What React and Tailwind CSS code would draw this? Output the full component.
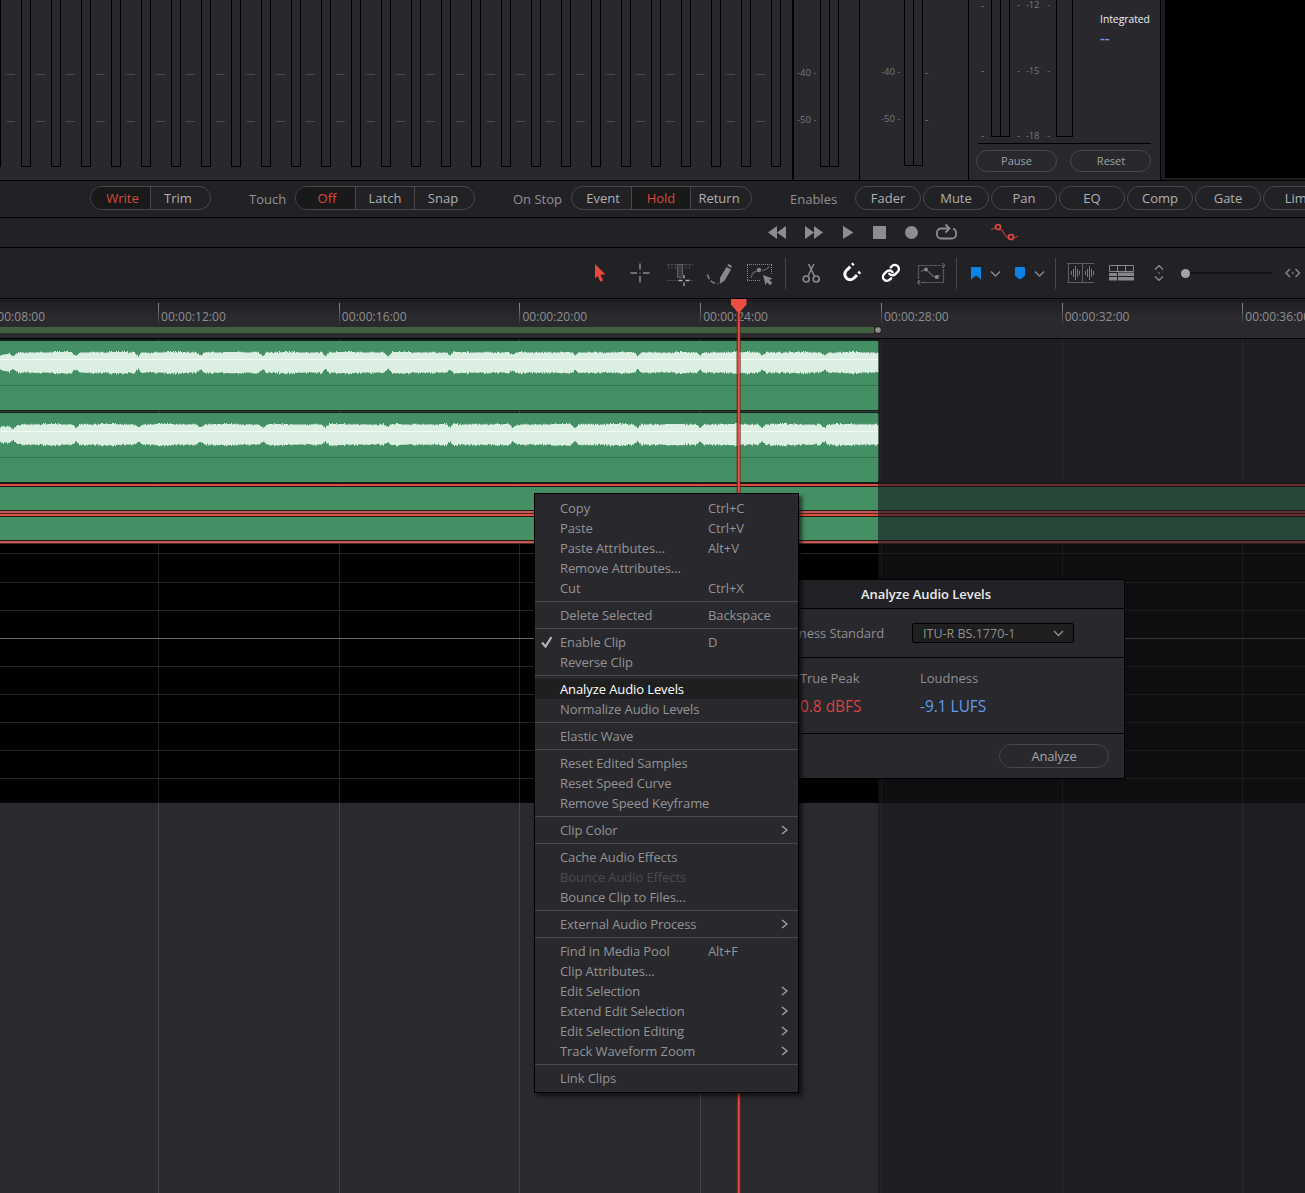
import clsx from 'clsx';

const strips = Array.from({ length: 27 }, (_, i) => i);
const timecodes = ['08', '12', '16', '20', '24', '28', '32', '36'];

const menuGroups = [
  [
    { label: 'Copy', keys: 'Ctrl+C' },
    { label: 'Paste', keys: 'Ctrl+V' },
    { label: 'Paste Attributes...', keys: 'Alt+V' },
    { label: 'Remove Attributes...' },
    { label: 'Cut', keys: 'Ctrl+X' },
  ],
  [{ label: 'Delete Selected', keys: 'Backspace' }],
  [{ label: 'Enable Clip', keys: 'D', checked: true }, { label: 'Reverse Clip' }],
  [{ label: 'Analyze Audio Levels', active: true }, { label: 'Normalize Audio Levels' }],
  [{ label: 'Elastic Wave' }],
  [
    { label: 'Reset Edited Samples' },
    { label: 'Reset Speed Curve' },
    { label: 'Remove Speed Keyframe' },
  ],
  [{ label: 'Clip Color', sub: true }],
  [
    { label: 'Cache Audio Effects' },
    { label: 'Bounce Audio Effects', disabled: true },
    { label: 'Bounce Clip to Files...' },
  ],
  [{ label: 'External Audio Process', sub: true }],
  [
    { label: 'Find in Media Pool', keys: 'Alt+F' },
    { label: 'Clip Attributes...' },
    { label: 'Edit Selection', sub: true },
    { label: 'Extend Edit Selection', sub: true },
    { label: 'Edit Selection Editing', sub: true },
    { label: 'Track Waveform Zoom', sub: true },
  ],
  [{ label: 'Link Clips' }],
];

// Builds the filled outline of a clip, one stepped sample per pixel
function wavePath(seed) {
  let s = seed;
  const rand = () => {
    s = (s * 16807) % 2147483647;
    return s / 2147483647;
  };
  const top = [];
  const bottom = [];
  for (let x = 0; x < 879; x++) {
    const d = Math.abs(((x - 13 + 31) % 62.4) - 31);
    const dip = d < 4 ? (4 - d) * 0.9 : 0;
    const start = x < 20 ? (20 - x) * 0.15 : 0;
    const swell = Math.sin(x / 9 + seed) > 0.5 ? 0.4 : -0.2;
    const n = rand();
    const jitter = n > 0.75 ? 0.9 : n < 0.1 ? -0.7 : 0;
    const amp = 10.2 + swell + jitter - dip - start;
    const y1 = (21.6 - amp).toFixed(1);
    const y2 = (21.6 + amp + (rand() - 0.5) * 0.6).toFixed(1);
    top.push(`${x} ${y1}L${x + 1} ${y1}`);
    bottom.unshift(`${x + 1} ${y2}L${x} ${y2}`);
  }
  return `M${top.join('L')}L${bottom.join('L')}Z`;
}

const Icon = ({ w, h = 26, className, children }) => (
  <svg
    className={clsx('shrink-0', className)}
    width={w}
    height={h}
    viewBox={`0 0 ${w} ${h}`}
    fill="none"
    stroke="currentColor"
  >
    {children}
  </svg>
);

const Segment = ({ items, on, className }) => (
  <div
    className={clsx(
      'flex h-6 shrink-0 overflow-hidden rounded-full border border-[#47474d] text-[#b0b0b1]',
      className
    )}
  >
    {items.map((item, i) => (
      <span
        key={item}
        className={clsx(
          'flex items-center justify-center pt-[2px]',
          i === 0 ? 'w-[59px]' : 'border-l border-[#47474d]',
          i > 0 && i === items.length - 1 && 'grow basis-0',
          i === 1 && items.length === 3 && (item === 'Hold' ? 'w-[59px]' : 'w-[59px]'),
          item === on && 'bg-[#19191a] text-[#d9493e]',
          item === 'Off' && 'pl-[3px]',
          item === 'Write' && 'pl-[4px]',
          item === 'Event' && 'pl-[3px]',
          item === 'Trim' && 'pr-[5px]',
          item === 'Return' && 'pr-[4px]',
          item === 'Snap' && 'pr-[3px]'
        )}
      >
        {item}
      </span>
    ))}
  </div>
);

const Pill = ({ className, children }) => (
  <button
    className={clsx(
      'flex shrink-0 items-center justify-center rounded-full border border-[#47474d]',
      className
    )}
  >
    {children}
  </button>
);

const StereoMeter = ({ className }) => (
  <div className={clsx('flex w-[19px] shrink-0 border border-t-0 border-black', className)}>
    <div className="w-[9px] border-r border-black" />
  </div>
);

const Mixer = () => (
  <section className="flex h-[181px] border-b border-black bg-[#28282d] text-[10px] leading-[14px] text-[#77777b]">
    <div className="flex w-[794px] shrink-0 overflow-hidden border-r-2 border-black">
      <div className="-ml-[9px] flex shrink-0">
        {strips.map((i) => (
          <div key={i} className="flex w-[30px] shrink-0">
            <div className="h-[167px] w-[10px] border border-t-0 border-black" />
            {i < 26 && (
              <div className="ml-[5px] w-[9px]">
                <div className="mt-[74px] h-px bg-[#4a4a55]" />
                <div className="mt-[46px] h-px bg-[#4a4a55]" />
              </div>
            )}
          </div>
        ))}
      </div>
    </div>
    <div className="flex w-[66px] shrink-0 border-r border-black">
      <div className="w-[26px] pl-[3px] pt-[66px] whitespace-nowrap text-[9.5px]">
        <div>-40 -</div>
        <div className="mt-[33px]">-50 -</div>
      </div>
      <StereoMeter className="h-[167px]" />
    </div>
    <div className="flex w-[109px] shrink-0 border-r border-black">
      <div className="w-[44px] pl-[21px] pt-[65px] whitespace-nowrap text-[9.5px]">
        <div>-40 -</div>
        <div className="mt-[33px]">-50 -</div>
      </div>
      <StereoMeter className="h-[166px]" />
      <div className="pl-[2px] pt-[65px]">
        <div>-</div>
        <div className="mt-[33px]">-</div>
      </div>
    </div>
    <div className="w-[192px] shrink-0 border-r border-black">
      <div className="flex h-[143px]">
        <div className="w-[22px] pl-[12px]">
          <div className="leading-[10px]">-</div>
          <div className="mt-[53px]">-</div>
          <div className="mt-[51px]">-</div>
        </div>
        <StereoMeter className="h-[137px]" />
        <div className="w-[46px] pl-[7px] text-[9.5px]">
          {['12', '15', '18'].map((n, i) => (
            <div
              key={n}
              className={clsx(
                'flex',
                i === 0 && 'leading-[10px]',
                i === 1 && 'mt-[54px]',
                i === 2 && 'mt-[51px]'
              )}
            >
              <span className="w-[9px]">-</span>
              <span className="w-[21px] tracking-[-0.2px]">-{n}</span>
              <span>-</span>
            </div>
          ))}
        </div>
        <div className="h-[137px] w-[17px] border border-t-0 border-black" />
        <div className="ml-[27px] pt-[12px]">
          <div className="text-[10.3px] font-medium text-[#f0f0f0]">Integrated</div>
          <div className="mt-[4px] text-[15px] font-semibold text-[#6f97ee]">--</div>
        </div>
      </div>
      <div className="mx-[9px] h-px bg-black" />
      <div className="mt-[6px] ml-[7px] flex gap-[13px] text-[11px] text-[#a0a0a2]">
        <Pill className="h-[22px] w-[81px]">Pause</Pill>
        <Pill className="h-[22px] w-[81px] pl-px">Reset</Pill>
      </div>
    </div>
    <div className="grow bg-[#1c1c1f] pb-[2px] pl-[4px]">
      <div className="h-full bg-black" />
    </div>
  </section>
);

const AutomationBar = () => (
  <section className="flex h-[37px] items-center overflow-hidden border-b border-black bg-[#222226] pb-[2px] text-[13px] text-[#919193]">
    <Segment items={['Write', 'Trim']} on="Write" className="ml-[90px] w-[121px]" />
    <span className="ml-[38px] w-[46px] shrink-0 pt-[3px]">Touch</span>
    <Segment items={['Off', 'Latch', 'Snap']} on="Off" className="w-[180px]" />
    <span className="ml-[38px] w-[58px] shrink-0 whitespace-nowrap pt-[3px]">On Stop</span>
    <Segment items={['Event', 'Hold', 'Return']} on="Hold" className="w-[181px]" />
    <span className="ml-[38px] w-[65px] shrink-0 pt-[3px]">Enables</span>
    <div className="flex shrink-0 gap-[2px] text-[#b0b0b1]">
      {['Fader', 'Mute', 'Pan', 'EQ', 'Comp', 'Gate'].map((name) => (
        <Pill key={name} className="h-6 w-[66px] pt-[2px]">
          {name}
        </Pill>
      ))}
      <Pill className="h-6 w-[86px] pt-[2px]">Limiter</Pill>
    </div>
  </section>
);

const Transport = () => (
  <section className="flex h-[30px] items-center border-b border-black bg-[#222226] pl-[766px] text-[#8d8d8d]">
    <Icon w={22} h={21}>
      <path fill="currentColor" stroke="none" d="M11 4v13L2 10.500zM20 4v13l-9-6.500z" />
    </Icon>
    <Icon w={22} h={21} className="ml-[15px]">
      <path fill="currentColor" stroke="none" d="M2 4v13l9-6.500zM11 4v13l9-6.500z" />
    </Icon>
    <Icon w={16} h={21} className="ml-[15px]">
      <path fill="currentColor" stroke="none" d="M3 4v13l10.500-6.500z" />
    </Icon>
    <Icon w={16} h={21} className="ml-[15px]">
      <path fill="currentColor" stroke="none" d="M2 4h13v13H2z" />
    </Icon>
    <Icon w={16} h={21} className="ml-[17px]">
      <circle cx="7.500" cy="10.500" r="6.500" fill="currentColor" stroke="none" />
    </Icon>
    <Icon w={23} h={21} className="ml-[15px]">
      <path
        strokeWidth="1.800"
        d="M7 6.500H6a4 4 0 0 0-4 4v2a4 4 0 0 0 4 4h11a4 4 0 0 0 4-4v-2a4 4 0 0 0-3-3.800M7 6.500h7.500M10.500 2.500l4 4-4 4"
      />
    </Icon>
    <Icon w={30} h={21} className="ml-[32px] text-[#e5483b]">
      <path strokeWidth="1.300" opacity=".7" d="M1 7.500l4-1.500M10.500 7c4 3 4 7.500 8.200 9.500M24 16l4-2" />
      <circle cx="8" cy="5" r="2.500" strokeWidth="1.700" />
      <circle cx="21" cy="15" r="2.500" strokeWidth="1.700" />
    </Icon>
  </section>
);

const Divider = ({ className }) => (
  <div className={clsx('h-[31px] w-px shrink-0 bg-[#47474b]', className)} />
);

const Chevron = () => (
  <Icon w={11} className="ml-[8px]">
    <path strokeWidth="1.500" d="M1 11.500l4.500 4.500L10 11.500" />
  </Icon>
);

const Toolbar = () => (
  <section className="flex h-[51px] items-center border-b border-black bg-[#222226] pl-[584px] text-[#88888a]">
    <div className="flex gap-2">
      <Icon w={32} className="text-[#e84a3c]">
        <path fill="currentColor" stroke="none" d="M11 4l10.500 10.500-5 .3 2.600 5.700-2.800 1.300-2.600-5.800-2.700 2.500z" />
      </Icon>
      <Icon w={32}>
        <path strokeWidth="1.600" d="M16 3.500v6M16 16v6.500M6.500 13H13M19 13h6.500" />
        <path strokeWidth="1" d="M16 12.500v1" />
      </Icon>
      <Icon w={32}>
        <path opacity=".3" d="M2.500 4.500h27M2.500 20.500h13M24 20.500h5" />
        <path opacity=".35" strokeDasharray="1 2.500" strokeWidth="4" d="M4 7h24" />
        <path fill="#3a3a3e" stroke="#626266" d="M13.500 4.500h5v13h-5z" />
        <path stroke="#222226" strokeWidth="3" d="M20 15v11M14 20.500h12" />
        <path stroke="#b0b0b2" strokeWidth="1.300" d="M20 15v3.500M20 22.500V26M14.500 20.500h4M21.500 20.500h4" />
      </Icon>
      <Icon w={32}>
        <path strokeDasharray="5 2" strokeWidth="1.400" d="M3.500 14.500c1 5 4.500 8.500 10 9.500" />
        <path
          fill="currentColor"
          stroke="none"
          d="M22.500 7l4.500 2.600-6.300 10.900-5 3.500.4-6.300zM23.300 5.600l1.300-1.500 3.200 1.700-.4 2.300z"
        />
      </Icon>
      <Icon w={32}>
        <path strokeDasharray="1 1" d="M3 4.500h25.500M3 20.500h14M3.500 5v15M27.500 5v10" />
        <path opacity=".6" strokeWidth="1.300" d="M7 18c.5-4 2-6 6-7M18 10.500c4-.5 5.500-1.500 7-4" />
        <circle cx="15" cy="10" r="2.200" fill="currentColor" stroke="none" />
        <path fill="currentColor" stroke="none" d="M19 15l9.500 3.500-3.200 1.500 3 3-2.300 2.300-3-3-1.500 3z" />
      </Icon>
    </div>
    <Divider className="ml-[9px]" />
    <div className="ml-[10px] flex gap-2">
      <Icon w={32}>
        <circle cx="10.200" cy="19" r="3" strokeWidth="1.700" />
        <circle cx="20.200" cy="19" r="3" strokeWidth="1.700" />
        <path strokeWidth="1.600" d="M11.800 16.500l6-12.500M18.600 16.500l-6-12.500" />
      </Icon>
      <Icon w={32} className="text-white">
        <path
          strokeWidth="3"
          d="M14.300 6.700l-3.800 3.600c-2.500 2.500-2 5.800 0 7.800s5.300 2.200 7.800-.3l2.700-2.800"
        />
        <path strokeWidth="3" d="M16 5l1.600-1.500M22.500 13.500l1.600-1.600" />
      </Icon>
      <Icon w={32} className="text-white">
        <g strokeWidth="3" strokeLinecap="round" transform="translate(5.300 3.300) scale(.8)">
          <path d="M10 13a5 5 0 0 0 7.540.54l3-3a5 5 0 0 0-7.070-7.070l-1.720 1.710" />
          <path d="M14 11a5 5 0 0 0-7.540-.54l-3 3a5 5 0 0 0 7.070 7.070l1.710-1.710" />
        </g>
      </Icon>
      <Icon w={32}>
        <path opacity=".5" strokeWidth="1.200" d="M2.500 17V5.500H19M6 22.500h21.500V11" />
        <path strokeDasharray="2 1" strokeWidth="1.200" opacity=".6" d="M19 5.500h8M2 22.500h7M2.500 17v5M27.500 6v5" />
        <path opacity=".8" d="M26 3l3 2.500L26 8M4.500 20l-3 2.500 3 2.500" />
        <path strokeWidth="1.300" opacity=".6" d="M5 11.500l4-2c5 1.500 6 7 11 8l4-2" />
        <circle cx="10" cy="9.500" r="2" fill="currentColor" stroke="none" />
        <circle cx="20.800" cy="17" r="2" fill="currentColor" stroke="none" />
      </Icon>
    </div>
    <Divider className="ml-[8px]" />
    <Icon w={12} className="ml-[13px]">
      <path fill="#0c83e6" stroke="none" d="M1 7h10v12.500l-5-4-5 4z" />
    </Icon>
    <Chevron />
    <Icon w={12} className="ml-[13px]">
      <path fill="#0c83e6" stroke="none" d="M1 8q0-1 1-1h8q1 0 1 1v7.500L7 19H5l-4-3.500z" />
    </Icon>
    <Chevron />
    <Divider className="ml-[10px]" />
    <Icon w={28} className="ml-[11px]">
      <path opacity=".6" d="M0 3.500h27M0 22.500h27M1.500 4v18M15.500 4v18" />
      <path
        opacity=".85"
        d="M4.500 11v4M6.500 9v8M8.500 6v14M10.500 9v8M12.500 11v4M18.500 11v4M20.500 9v8M22.500 6v14M24.500 9v8M26.500 11v4"
      />
    </Icon>
    <Icon w={26} className="ml-[14px]">
      <path d="M.5 5.500h24v6H.5zM8.500 5.500v6M16.500 5.500v6" />
      <path fill="currentColor" stroke="none" d="M0 13h8v3H0zM9 12.500h16V16H9zM0 17h8v3.500H0zM9 17h16v3.500H9z" />
    </Icon>
    <Icon w={10} className="ml-[19px]">
      <path strokeWidth="1.400" d="M1 9.500l4-3.700 4 3.700M1 16.500l4 3.700 4-3.700" />
      <path strokeWidth="1.400" d="M4.300 13h1.400" />
    </Icon>
    <div className="ml-[16.5px] flex w-[92.5px] shrink-0 items-center">
      <div className="size-[9px] rounded-full bg-[#a3a3a3]" />
      <div className="h-[2px] grow bg-[#151517]" />
    </div>
    <Icon w={16} className="ml-[12px]">
      <path strokeWidth="1.400" d="M5 9l-4 4 4 4M10.500 9l4 4-4 4" />
      <path strokeWidth="1.500" d="M7 13h1.500" />
    </Icon>
  </section>
);

const Ruler = () => (
  <section className="relative h-[40px] overflow-hidden border-b border-black bg-linear-to-b from-[#1e1e22] to-[#29292e] to-45%">
    <div className="-ml-[22.700px] flex h-[28px] pt-[4px]">
      {timecodes.map((t) => (
        <div key={t} className="flex w-[180.720px] shrink-0">
          <div className="h-[23px] w-px bg-linear-to-b from-[#919191] to-transparent" />
          <span className="pl-[2px] pt-[5px] text-[12px] leading-[18px] tracking-[0.040px] text-[#8f8f91]">
            00:00:{t}:00
          </span>
        </div>
      ))}
    </div>
    <div className="flex items-center">
      <div className="h-[6px] w-[874px] bg-[#40603f]" />
      <div className="-my-px size-[8px] rounded-full border border-[#111] bg-[#8f8f8f]" />
    </div>
  </section>
);

const AudioClip = ({ seed }) => (
  <div className="relative z-10 h-[69px] w-[879px] overflow-hidden rounded-r-[2px] bg-[#458f64]">
    <svg className="block" width="879" height="69" viewBox="0 0 879 69">
      <path d={wavePath(seed)} fill="#dbefe3" />
      <path d="M0 18.500h879" stroke="#f3fbf6" />
      <path d="M0 44.500h879" stroke="#35734f" />
    </svg>
  </div>
);

const Tracks = () => (
  <section className="relative h-[854px] overflow-hidden bg-[#29292e]">
    <div className="w-[879px] bg-[#14201b] pt-[2px] pb-px">
      <AudioClip seed={4217} />
      <div className="my-px h-px bg-[#2b3f38]" />
      <AudioClip seed={9031} />
    </div>
    <div className="relative z-10 border-t border-[#1c1414]">
      <div className="h-[2px] bg-[#dc5044]" />
      <div className="h-[25px] border-y border-[#251514] bg-[#458f64]" />
      <div className="h-[2px] bg-[#b95d54]" />
      <div className="h-px bg-[#5c1d18]" />
      <div className="h-[2px] bg-[#dc5044]" />
      <div className="h-[25px] border-y border-[#251514] bg-[#458f64]" />
      <div className="h-[2px] bg-[#b95d54]" />
      <div className="h-px bg-[#5a2723]" />
    </div>
    <div className="h-[259px] bg-black">
      <div className="h-[10px] border-b border-[#242424]" />
      <div className="h-[29px] border-b border-[#242424]" />
      <div className="h-[28px] border-b border-[#242424]" />
      <div className="h-[28px] border-b border-[#6a6a6a]" />
      <div className="h-[28px] border-b border-[#242424]" />
      <div className="h-[28px] border-b border-[#242424]" />
      <div className="h-[28px] border-b border-[#242424]" />
      <div className="h-[28px] border-b border-[#242424]" />
      <div className="h-[28px] border-b border-[#242424]" />
    </div>
    <div className="absolute inset-y-0 left-[-22.700px] flex">
      {timecodes.map((t) => (
        <div key={t} className="w-[180.720px] shrink-0">
          <div className="h-full w-px bg-white/12" />
        </div>
      ))}
    </div>
    {/* everything past the end of the clips is dimmed */}
    <div className="absolute inset-y-0 right-0 left-[878px] z-20 bg-[#17171b]/60" />
  </section>
);

const Playhead = () => (
  <div className="absolute top-[299px] bottom-0 left-[731px] z-30 flex w-[16px] pl-[5px]">
    <svg className="absolute top-0 left-0" width="16" height="15" viewBox="0 0 16 15">
      <path d="M0 0h15.500v5.500L9 13H6.500L0 5.500z" fill="#e9503f" />
    </svg>
    <div className="mt-[10px] w-px bg-[#6b2a25]/40" />
    <div className="mt-[10px] w-px bg-[#6b2a25]/80" />
    <div className="w-px bg-[#e0564a]" />
    <div className="w-px bg-[#c9483d]/80" />
    <div className="mt-[10px] w-px bg-[#6b2a25]/60" />
  </div>
);

const Dialog = () => (
  <div className="absolute top-[579px] left-[728px] z-40 w-[397px] border border-black bg-[#28282d] text-[13px] text-[#8f8f91]">
    <div className="flex h-[29px] items-center justify-center border-b border-black bg-[#222226] pt-[2px] pr-px font-semibold tracking-[-0.050px] text-[#ececec]">
      Analyze Audio Levels
    </div>
    <div className="flex h-[49px] items-center border-b border-black">
      <div className="w-[155px] pt-[2px] text-right whitespace-nowrap tracking-[-0.100px]">
        Loudness Standard
      </div>
      <div className="ml-[28px] flex h-[20px] w-[162px] items-center justify-between rounded-[2px] border border-black bg-[#1f1f1f] pr-[9px] pl-[10px] text-[12.500px]">
        <span className="pt-[2px]">ITU-R BS.1770-1</span>
        <svg width="11" height="7" viewBox="0 0 11 7" fill="none" stroke="currentColor">
          <path strokeWidth="1.400" d="M1 1l4.500 4.500L10 1" />
        </svg>
      </div>
    </div>
    <div className="flex h-[76px] border-b border-black pt-[10px] pl-[71px]">
      <div className="w-[120px]">
        <div className="leading-[20px] tracking-[-0.100px]">True Peak</div>
        <div className="mt-[7px] text-[15.400px] leading-[24px] text-[#d9423f]">0.8 dBFS</div>
      </div>
      <div>
        <div className="leading-[20px]">Loudness</div>
        <div className="mt-[7px] text-[15.400px] leading-[24px] text-[#639aef]">-9.1 LUFS</div>
      </div>
    </div>
    <div className="flex h-[44px] items-center justify-end pr-[15px]">
      <Pill className="h-6 w-[110px] pt-[2px] tracking-[-0.200px] text-[#a5a5a7]">Analyze</Pill>
    </div>
  </div>
);

const MenuItem = ({ item }) => (
  <li
    className={clsx(
      'flex h-5 items-center',
      item.active && 'bg-[#1f1f1f] text-white',
      item.disabled && 'text-[#4b4b50]'
    )}
  >
    <span className="w-[25px] pl-[6px]">
      {item.checked && (
        <svg width="13" height="12" viewBox="0 0 13 12" fill="none" stroke="#b5b5b6">
          <path strokeWidth="2.200" d="M1 6.500l3.500 4L10.500 1" />
        </svg>
      )}
    </span>
    <span className="w-[148px] pt-[2px] whitespace-nowrap">{item.label}</span>
    <span className="grow pt-[2px]">{item.keys}</span>
    {item.sub && (
      <svg className="mr-[10px]" width="7" height="10" viewBox="0 0 7 10" fill="none" stroke="#a5a5a7">
        <path strokeWidth="1.400" d="M1 1l5 4-5 4" />
      </svg>
    )}
  </li>
);

const ContextMenu = () => (
  <div className="absolute top-[493px] left-[534px] z-50 w-[265px] border border-black bg-[#28282d] py-[4px] text-[13px] tracking-[-0.100px] text-[#949496] shadow-[3px_3px_4px_rgba(0,0,0,0.6)]">
    {menuGroups.map((group, i) => (
      <ul key={i} className={clsx(i > 0 && 'mt-[3px] border-t border-[#4a4a4f] pt-[3px]')}>
        {group.map((item) => (
          <MenuItem key={item.label} item={item} />
        ))}
      </ul>
    ))}
  </div>
);

export default function App() {
  return (
    <div className="relative h-[1193px] w-[1305px] overflow-hidden bg-[#28282d] font-['Open_Sans',sans-serif]">
      <Mixer />
      <AutomationBar />
      <Transport />
      <Toolbar />
      <Ruler />
      <Tracks />
      <Playhead />
      <Dialog />
      <ContextMenu />
    </div>
  );
}
